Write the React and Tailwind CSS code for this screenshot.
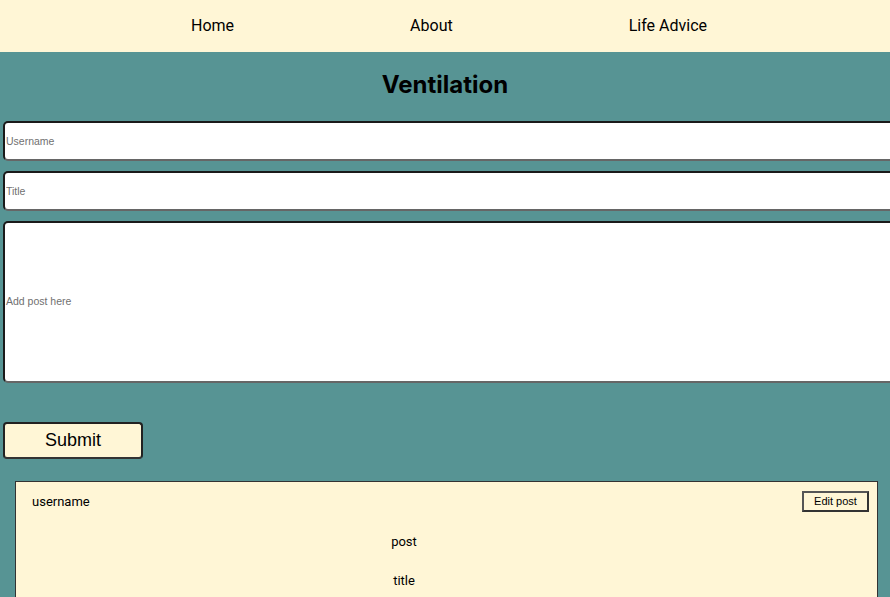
import React from 'react';

const App = () => {
  return (
    <div className="min-h-screen w-full overflow-x-hidden bg-[#579494] font-['Roboto',sans-serif] text-black">
      {/* Nav */}
      <nav className="h-[52px] bg-[#fff6d6] flex justify-center items-center gap-[176px] pl-[8px] text-[16px]">
        <a className="cursor-pointer">Home</a>
        <a className="cursor-pointer">About</a>
        <a className="cursor-pointer">Life Advice</a>
      </nav>

      <h1 className="mt-[17px] text-center text-[24px] leading-[32px] font-bold font-['Inter',sans-serif]">Ventilation</h1>

      {/* Form */}
      <form className="mt-[20px] flex flex-col gap-[10px] pl-[3px]">
        <input
          placeholder="Username"
          className="w-[900px] h-[40px] bg-white rounded-[5px] border-2 border-[#1a1a1a] border-b-[#666] px-[1px] text-[10.5px] font-['Liberation_Sans',Arial,sans-serif] placeholder:text-[#707070] outline-none"
        />
        <input
          placeholder="Title"
          className="w-[900px] h-[40px] bg-white rounded-[5px] border-2 border-[#1a1a1a] border-b-[#666] px-[1px] text-[10.5px] font-['Liberation_Sans',Arial,sans-serif] placeholder:text-[#707070] outline-none"
        />
        <div className="w-[900px] h-[162px] bg-white rounded-[5px] border-2 border-[#1a1a1a] border-b-[#666] flex items-center px-[1px]">
          <span className="text-[10.5px] text-[#707070] font-['Liberation_Sans',Arial,sans-serif]">Add post here</span>
        </div>
        <button
          type="button"
          className="mt-[29px] w-[140px] h-[37px] bg-[#fff6d6] rounded-[4px] border-2 border-[#222] border-b-[#333] text-[18px] font-['Liberation_Sans',Arial,sans-serif]"
        >
          Submit
        </button>
      </form>

      {/* Post card */}
      <div className="mt-[22px] ml-[15px] mr-[12px] bg-[#fff6d6] border border-[#333] flex h-[140px]">
        <div className="w-[776px] text-[13px]">
          <div className="pt-[12px] pl-[16px] leading-[16px]">username</div>
          <div className="mt-[24px] text-center leading-[16px]">post</div>
          <div className="mt-[23px] text-center leading-[16px]">title</div>
        </div>
        <div className="flex-1 flex justify-end pt-[9px] pr-[8px]">
          <button
            type="button"
            className="w-[67px] h-[21px] border-2 border-[#333] border-l-[#555] border-t-[#555] bg-[#fff6d6] text-[11px] font-['Liberation_Sans',Arial,sans-serif]"
          >
            Edit post
          </button>
        </div>
      </div>
    </div>
  );
};

export default App;
